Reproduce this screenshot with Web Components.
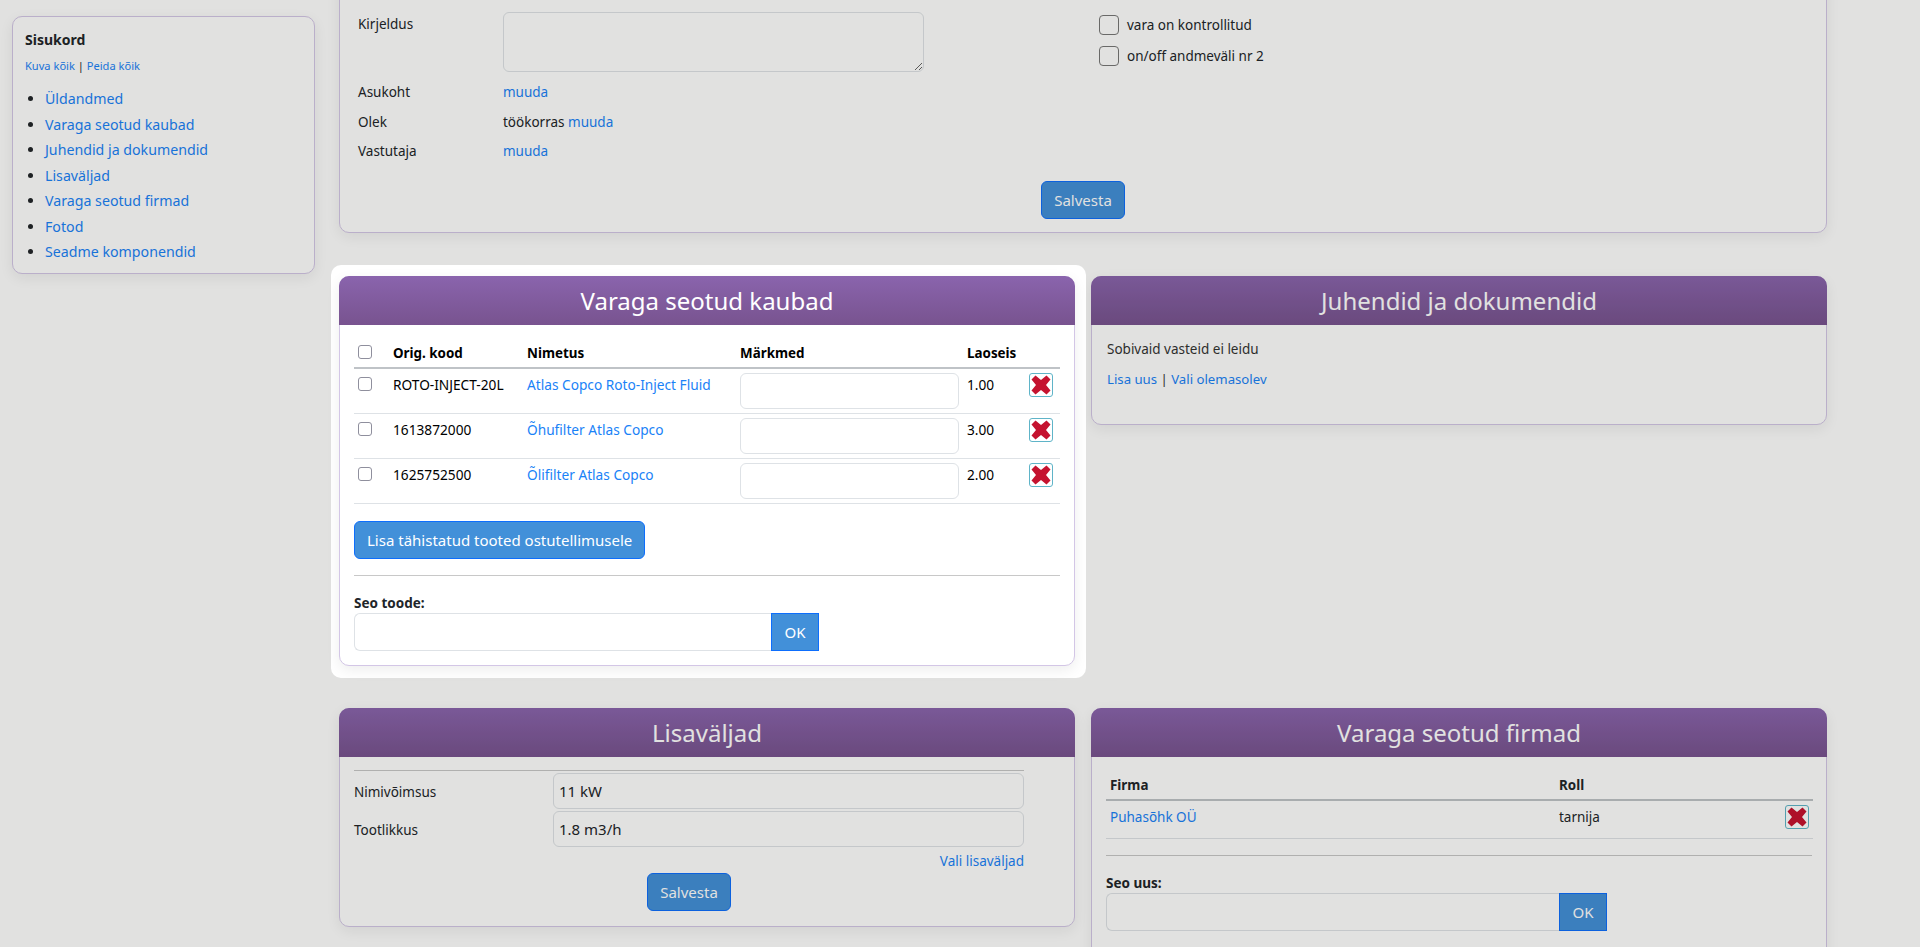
<!DOCTYPE html>
<html lang="et">
<head>
<meta charset="utf-8">
<title>Vara</title>
<style>
    html, body { margin: 0; height: 947px; overflow: hidden; background: #fff; }
    body { font-family: "Noto Sans", "Open Sans", sans-serif; font-size: 13.5px; color: #212529; }
</style>
</head>
<body>
<asset-page></asset-page>

<script>
const LINK = '#1a82f7';

const base = `
    a { color: ${LINK}; text-decoration: none; }
    input[type=text], textarea {
        box-sizing: border-box; display: block; width: 100%; margin: 0; padding: 6px 5px;
        border: 1px solid #dee2e6; border-radius: 6px; background: #fff;
        font: 15px "Noto Sans", sans-serif; color: #212529; outline: none;
    }
    input[type=checkbox] {
        appearance: none; box-sizing: border-box; display: block; width: 14px; height: 14px; margin: 0;
        border: 1px solid #8f8f9d; border-radius: 3px; background: #fff;
    }
`;

class UiButton extends HTMLElement {
    constructor() {
        super();
        this.attachShadow({ mode: 'open' }).innerHTML = `
            <style>
                :host { display: inline-block; }
                button {
                    display: block; box-sizing: border-box; height: 38px; padding: 0 12px;
                    background: #4290d9; color: #fff; border: 1px solid #0d6efd; border-radius: 6px;
                    font: 15px "Noto Sans", sans-serif; cursor: pointer;
                }
                :host([square]) button { border-radius: 0; padding: 0 12.5px; }
            </style>
            <button><slot></slot></button>
        `;
    }
}
customElements.define('ui-button', UiButton);

class DelButton extends HTMLElement {
    constructor() {
        super();
        this.attachShadow({ mode: 'open' }).innerHTML = `
            <style>
                :host { display: block; width: 24px; height: 24px; }
                button {
                    display: flex; align-items: center; justify-content: center; box-sizing: border-box;
                    width: 24px; height: 24px; padding: 0; background: #fff;
                    border: 1px solid #5fb4c8; border-radius: 3px; cursor: pointer;
                }
            </style>
            <button aria-label="Kustuta">
                <svg width="20" height="20" viewBox="0 0 20 20"><path fill="#c5122f" d="M4.5 .5 L10 5 L15.5 .5 L19.5 4.5 L15 10 L19.5 15.5 L15.5 19.5 L10 15 L4.5 19.5 L.5 15.5 L5 10 L.5 4.5 Z"/></svg>
            </button>
        `;
    }
}
customElements.define('del-button', DelButton);

class UiCard extends HTMLElement {
    constructor() {
        super();
        const heading = this.getAttribute('heading');
        this.attachShadow({ mode: 'open' }).innerHTML = `
            <style>
                :host { display: block; position: relative; }
                :host([spot]) { z-index: 11; }
                :host([spot])::before {
                    content: ''; position: absolute; inset: -11px -11px -12px -8px;
                    background: #fff; border-radius: 10px; z-index: -1;
                }
                .box {
                    background: #fff; border: 1px solid #d3c6e6; border-radius: 10px;
                    box-shadow: 0 4px 14px rgba(0, 0, 0, .07);
                }
                h2 {
                    box-sizing: border-box; height: 49px; margin: -1px -1px 0; padding: 0;
                    border-radius: 10px 10px 0 0; background: linear-gradient(#8a64ad, #78538f);
                    color: #fff; font: 400 24px/50px "Noto Sans", sans-serif; text-align: center;
                }
                h2:empty { display: none; }
                .body { padding: var(--card-pad, 13px 14px 14px); }
            </style>
            <div class="box">
                <h2>${heading || ''}</h2>
                <div class="body"><slot></slot></div>
            </div>
        `;
    }
}
customElements.define('ui-card', UiCard);

class TocNav extends HTMLElement {
    constructor() {
        super();
        const items = ['Üldandmed', 'Varaga seotud kaubad', 'Juhendid ja dokumendid', 'Lisaväljad',
            'Varaga seotud firmad', 'Fotod', 'Seadme komponendid'];
        this.attachShadow({ mode: 'open' }).innerHTML = `
            <style>
                ${base}
                :host {
                    display: block; box-sizing: border-box; height: 258px; padding: 13px 12px 8px;
                    background: #fff; border: 1px solid #d3c6e6; border-radius: 10px;
                    box-shadow: 0 4px 14px rgba(0, 0, 0, .07);
                }
                b { display: block; font-size: 14px; line-height: 20px; }
                .all { margin-top: 8px; font-size: 11.1px; line-height: 16px; }
                ul { margin: 12px 0 0; padding: 0 0 0 20px; }
                li { height: 25.5px; font-size: 14.2px; line-height: 25.5px; }
            </style>
            <b>Sisukord</b>
            <div class="all"><a href="#">Kuva kõik</a> | <a href="#">Peida kõik</a></div>
            <ul>${items.map(t => `<li><a href="#">${t}</a></li>`).join('')}</ul>
        `;
    }
}
customElements.define('toc-nav', TocNav);

class AssetForm extends HTMLElement {
    constructor() {
        super();
        this.attachShadow({ mode: 'open' }).innerHTML = `
            <style>
                ${base}
                :host { display: block; }
                .top { display: grid; grid-template-columns: 145px 421px 175px 1fr; }
                .lab { grid-column: 1; line-height: 20px; }
                textarea { height: 60px; grid-column: 2; grid-row: 1; resize: both; }
                .checks { grid-column: 4; grid-row: 1 / span 4; display: flex; flex-direction: column; gap: 11px; padding-top: 3px; }
                .checks label { display: flex; align-items: center; gap: 8px; height: 20px; }
                .checks input[type=checkbox] { width: 20px; height: 20px; border-radius: 4px; border-color: #777; }
                .val { line-height: 20px; grid-column: 2 / span 2; }
                .sp1 { padding-top: 10px; } .sp2 { padding-top: 9.5px; }
                .save { display: flex; justify-content: center; margin-top: 20px; }
            </style>
            <div class="top">
                <div class="lab" style="grid-row:1;padding-top:2px">Kirjeldus</div>
                <textarea></textarea>
                <div class="checks">
                    <label><input type="checkbox">vara on kontrollitud</label>
                    <label><input type="checkbox">on/off andmeväli nr 2</label>
                </div>
                <div class="lab sp1">Asukoht</div><div class="val sp1"><a href="#">muuda</a></div>
                <div class="lab sp2">Olek</div><div class="val sp2">töökorras <a href="#">muuda</a></div>
                <div class="lab sp2">Vastutaja</div><div class="val sp2"><a href="#">muuda</a></div>
            </div>
            <div class="save"><ui-button>Salvesta</ui-button></div>
        `;
    }
}
customElements.define('asset-form', AssetForm);

class LinkForm extends HTMLElement {
    constructor() {
        super();
        this.attachShadow({ mode: 'open' }).innerHTML = `
            <style>
                ${base}
                :host { display: block; }
                b { display: block; line-height: 20px; font-size: 13.5px; }
                .line { display: flex; }
                input[type=text] { height: 38px; border-radius: 6px 0 0 6px; border-right: 0; width: var(--field-w, 417px); }
            </style>
            <b>${this.getAttribute('label')}</b>
            <div class="line"><input type="text"><ui-button square>OK</ui-button></div>
        `;
    }
}
customElements.define('link-form', LinkForm);

class GoodsTable extends HTMLElement {
    constructor() {
        super();
        const rows = [
            ['ROTO-INJECT-20L', 'Atlas Copco Roto-Inject Fluid', '1.00'],
            ['1613872000', 'Õhufilter Atlas Copco', '3.00'],
            ['1625752500', 'Õlifilter Atlas Copco', '2.00']
        ];
        this.attachShadow({ mode: 'open' }).innerHTML = `
            <style>
                ${base}
                :host { display: block; color: #000; font-size: 13.7px; }
                table { width: 706px; table-layout: fixed; border-collapse: collapse; }
                th { padding: 5px 4px 2px; height: 20px; font-size: 13.4px; text-align: left; line-height: 20px; border-bottom: 2px solid #bfc3c7; vertical-align: top; }
                td { padding: 6px 4px 4px; line-height: 20px; border-bottom: 1px solid #dee2e6; vertical-align: top; }
                td.box { padding: 8px 4px 0; } th.box { padding-top: 7px; }
                td.ctl { padding: 4px; }
                input[type=text] { height: 36px; }
            </style>
            <table>
                <colgroup><col style="width:35px"><col style="width:134px"><col style="width:213px"><col style="width:227px"><col style="width:62px"><col style="width:35px"></colgroup>
                <thead><tr>
                    <th class="box"><input type="checkbox"></th><th>Orig. kood</th><th>Nimetus</th><th>Märkmed</th><th>Laoseis</th><th></th>
                </tr></thead>
                <tbody>
                    ${rows.map(r => `<tr>
                        <td class="box"><input type="checkbox"></td>
                        <td>${r[0]}</td>
                        <td><a href="#">${r[1]}</a></td>
                        <td class="ctl"><input type="text"></td>
                        <td>${r[2]}</td>
                        <td class="ctl"><del-button></del-button></td>
                    </tr>`).join('')}
                </tbody>
            </table>
        `;
    }
}
customElements.define('goods-table', GoodsTable);

class FirmTable extends HTMLElement {
    constructor() {
        super();
        this.attachShadow({ mode: 'open' }).innerHTML = `
            <style>
                ${base}
                :host { display: block; }
                table { width: 707px; table-layout: fixed; border-collapse: collapse; }
                th { padding: 5px 4px 4px; font-size: 13.4px; text-align: left; line-height: 20px; border-bottom: 2px solid #bfc3c7; }
                td { padding: 6px 4px 11px; line-height: 20px; border-bottom: 1px solid #dee2e6; vertical-align: top; }
                td.ctl { padding: 4px; }
            </style>
            <table>
                <colgroup><col style="width:449px"><col style="width:226px"><col style="width:32px"></colgroup>
                <thead><tr><th>Firma</th><th>Roll</th><th></th></tr></thead>
                <tbody><tr>
                    <td><a href="#">Puhasõhk OÜ</a></td><td>tarnija</td>
                    <td class="ctl"><del-button></del-button></td>
                </tr></tbody>
            </table>
        `;
    }
}
customElements.define('firm-table', FirmTable);

class ExtraFields extends HTMLElement {
    constructor() {
        super();
        this.attachShadow({ mode: 'open' }).innerHTML = `
            <style>
                ${base}
                :host { display: block; width: 670px; }
                hr { height: 1px; border: 0; margin: 0 0 2px; background: #c8c8c8; }
                .row { display: grid; grid-template-columns: 199px 1fr; align-items: center; margin-bottom: 2px; }
                .row span { padding-top: 1px; }
                input[type=text] { height: 36px; }
                .pick { text-align: right; line-height: 20px; margin-top: 4px; }
                .save { display: flex; justify-content: center; margin-top: 2px; }
            </style>
            <hr>
            <div class="row"><span>Nimivõimsus</span><input type="text" value="11 kW"></div>
            <div class="row"><span>Tootlikkus</span><input type="text" value="1.8 m3/h"></div>
            <div class="pick"><a href="#">Vali lisaväljad</a></div>
            <div class="save"><ui-button>Salvesta</ui-button></div>
        `;
    }
}
customElements.define('extra-fields', ExtraFields);

class TourOverlay extends HTMLElement {
    constructor() {
        super();
        this.attachShadow({ mode: 'open' }).innerHTML = `
            <style>
                :host { position: fixed; inset: 0; z-index: 10; background: rgba(10, 10, 0, .12); }
            </style>
        `;
    }
}
customElements.define('tour-overlay', TourOverlay);

class AssetPage extends HTMLElement {
    constructor() {
        super();
        this.attachShadow({ mode: 'open' }).innerHTML = `
            <style>
                ${base}
                :host { display: grid; grid-template-columns: 303px 1fr; column-gap: 24px; padding-left: 12px; height: 947px; overflow: hidden; }
                toc-nav { margin-top: 16px; align-self: start; }
                main {
                    display: grid; grid-template-columns: 736px 736px; column-gap: 16px; row-gap: 42.5px;
                    align-content: start; align-items: start;
                }
                .wide { grid-column: 1 / span 2; margin-top: -30px; --card-pad: 41px 18px 13px; }
                hr { height: 1px; border: 0; margin: 16px 0 17px; background: #c8c8c8; }
                .docs p { margin: 0; line-height: 20px; }
                .docs .acts { margin-top: 10px; font-size: 13.2px; }
                .docs { --card-pad: 14px 15px 35px; color: #333; }
                .lisa { --card-pad: 13px 14px 15px; }
                .firm { --card-pad: 13px 14px 40px; }
            </style>
            <toc-nav></toc-nav>
            <main>
                <ui-card class="wide"><asset-form></asset-form></ui-card>

                <ui-card spot heading="Varaga seotud kaubad">
                    <goods-table></goods-table>
                    <ui-button style="margin-top:17px;display:block;width:max-content">Lisa tähistatud tooted ostutellimusele</ui-button>
                    <hr>
                    <link-form label="Seo toode:"></link-form>
                </ui-card>

                <ui-card class="docs" heading="Juhendid ja dokumendid">
                    <p>Sobivaid vasteid ei leidu</p>
                    <p class="acts"><a href="#">Lisa uus</a> | <a href="#">Vali olemasolev</a></p>
                </ui-card>

                <ui-card class="lisa" heading="Lisaväljad"><extra-fields></extra-fields></ui-card>

                <ui-card class="firm" heading="Varaga seotud firmad">
                    <firm-table></firm-table>
                    <hr>
                    <link-form label="Seo uus:" style="--field-w:453px"></link-form>
                </ui-card>
            </main>
            <tour-overlay></tour-overlay>
        `;
    }
}
customElements.define('asset-page', AssetPage);
</script>
</body>
</html>
